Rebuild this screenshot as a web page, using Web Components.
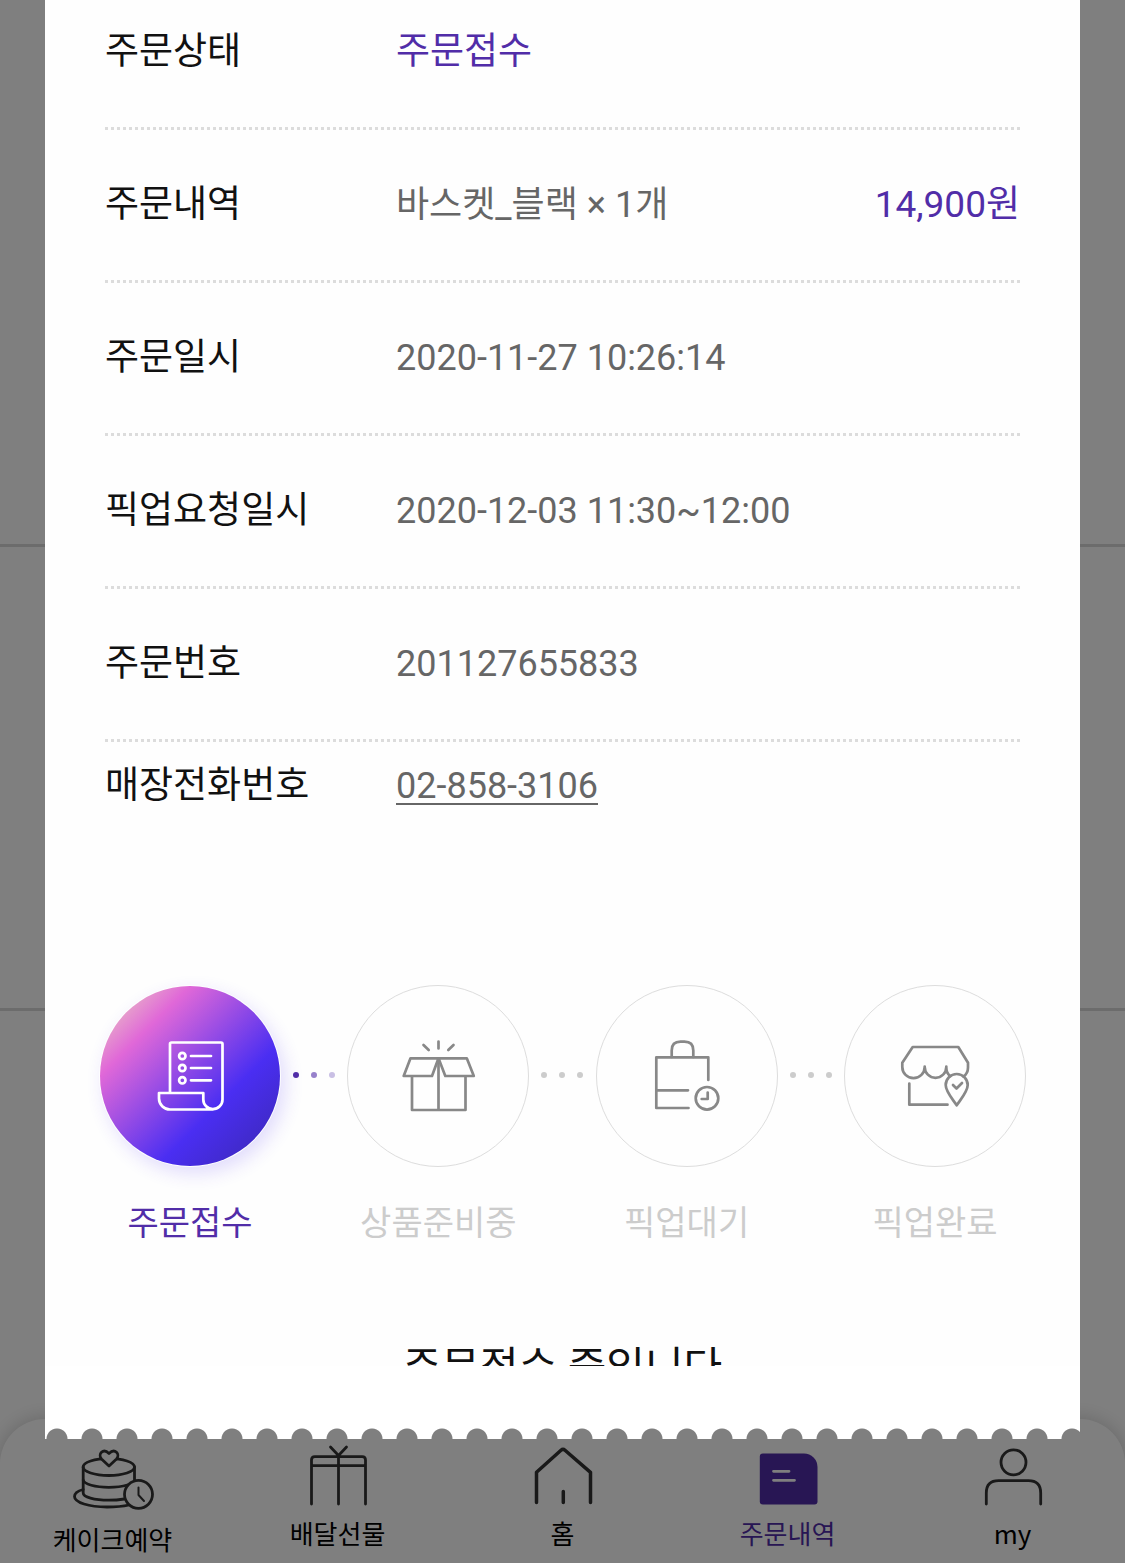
<!DOCTYPE html>
<html lang="ko">
<head>
<meta charset="utf-8">
<meta name="viewport" content="width=device-width, initial-scale=1">
<title>주문내역</title>
<style>
  body {
    margin: 0;
    background: #fff;
    font-family: Roboto, "Noto Sans CJK KR", sans-serif;
    color: #111;
    --point: #512da8;
    --line: #dcdcdc;
  }
</style>
</head>
<body>
<order-app>
  <order-sheet>
    <order-row>
      <span slot="label">주문상태</span>
      <strong>주문접수</strong>
    </order-row>
    <order-row>
      <span slot="label">주문내역</span>
      바스켓_블랙 × 1개
      <strong slot="price">14,900원</strong>
    </order-row>
    <order-row><span slot="label">주문일시</span>2020-11-27 10:26:14</order-row>
    <order-row><span slot="label">픽업요청일시</span>2020-12-03 11:30~12:00</order-row>
    <order-row><span slot="label">주문번호</span>201127655833</order-row>
    <order-row last>
      <span slot="label">매장전화번호</span>
      <a href="tel:02-858-3106">02-858-3106</a>
    </order-row>

    <step-list slot="steps">
      <step-item icon="receipt" active>주문접수</step-item>
      <step-dots active></step-dots>
      <step-item icon="box">상품준비중</step-item>
      <step-dots></step-dots>
      <step-item icon="bag">픽업대기</step-item>
      <step-dots></step-dots>
      <step-item icon="store">픽업완료</step-item>
    </step-list>

    <span slot="message">주문접수 중입니다</span>
  </order-sheet>

  <nav-item slot="nav" icon="cake" href="#cake">케이크예약</nav-item>
  <nav-item slot="nav" icon="gift" href="#gift">배달선물</nav-item>
  <nav-item slot="nav" icon="home" href="#home">홈</nav-item>
  <nav-item slot="nav" icon="order" href="#order" active>주문내역</nav-item>
  <nav-item slot="nav" icon="my" href="#my">my</nav-item>
</order-app>

<script>
// step icons share the 182 x 182 box of the circle
const stepIcons = {
  receipt: `
    <path d="M71 107V59q0-1.500 1.500-1.500H122q1.500 0 1.500 1.500V114.500a9.600 9.600 0 0 1-19.200 0V108H60v5.500a11 11 0 0 0 11 11h43"/>
    <circle cx="83.300" cy="71" r="3.200"/><circle cx="83.300" cy="83" r="3.200"/><circle cx="83.300" cy="95.300" r="3.200"/>
    <path d="M92 71h20M92 83h20M92 95.300h20"/>`,
  box: `
    <path d="M65 92v33h53.500V92M91.500 74v51"/>
    <path d="M63.500 73.300h56.300l7 17.700H98.300l-6.800-17.700L85 91H56.700z"/>
    <path d="M91.500 56.500v7M76.500 60l5.200 5M106.500 60l-5.200 5"/>`,
  bag: `
    <path d="M112.300 95V72.300h-52V123H92.500M60.300 105.300H92"/>
    <path d="M75.700 72V65.500q0-8.800 8.800-8.800h4q8.800 0 8.800 8.800V72"/>
    <circle cx="111" cy="113.300" r="11.300"/>
    <path d="M111.700 107.500v6.500h-6"/>`,
  store: `
    <path d="M102.300 81.500v1c0 3.500 1.500 6.500 3.700 8.500M119.500 91.500c2.900-2 4.500-5.300 4.500-9v-4.800L114.300 62H68.700L58.300 77.700v4.300a11.200 11.200 0 0 0 22.400 0v-.500.500a10.800 10.800 0 0 0 21.600 0"/>
    <path d="M65.300 98.500v21.200H103.500"/>
    <path d="M112.700 120.300c-3.500-5.500-11-13.500-11-20.300a11 11 0 0 1 22 0c0 6.800-7.500 14.800-11 20.300z"/>
    <path d="M109 100l3.500 3.500 5.500-5.500"/>`
};

const navIcons = {
  cake: `
    <path d="M15.200 46.500C9.500 48 6.500 50.500 6.500 53.500 6.500 59.500 21 64 39 64c8.500 0 16-.600 22-2"/>
    <path d="M15.200 24v26c0 4 11 7.200 25.600 7.200 6 0 11-.500 15.500-1.200M66.500 24v13"/>
    <ellipse cx="40.800" cy="24" rx="25.700" ry="8.500"/>
    <path d="M15.200 37c1 4.300 12 7.300 25.600 7.300 7 0 13.500-.800 18.500-2.300"/>
    <path class="paper" d="M41 23l-7.500-7c-4-4.500 1.500-11.500 7.500-5.500 6-6 11.500 1 7.500 5.500z"/>
    <circle class="paper" cx="70.500" cy="51.300" r="14"/>
    <path stroke-width="2" d="M70.500 44.500v7.500l5.500 6"/>`,
  gift: `
    <path d="M18.500 61V17q0-3.300 3.300-3.300h47.400q3.300 0 3.300 3.300v44M18.500 22.700h54M45.500 13v48M37.500 4l8 8.500L53.500 4"/>`,
  home: `
    <path stroke-width="3.500" d="M18.500 59.500V29.300L43 7.300q2-1.800 4 0L72.500 29.300V59.500M45.300 48.500v11"/>`,
  order: `
    <path fill="currentColor" stroke="none" d="M19.800 10.500H61a13.500 13.500 0 0 1 13.500 13.500v34.500a3 3 0 0 1-3 3H19.800a3 3 0 0 1-3-3v-45a3 3 0 0 1 3-3z"/>
    <path stroke="#fff" d="M30.500 28.300h15.500M30.500 37.300h21"/>`,
  my: `
    <circle cx="45.500" cy="19.300" r="12.500"/>
    <path d="M18.300 61V50q0-12.300 12.300-12.300h29.800q12.300 0 12.300 12.300v11"/>`
};

function makeRoot(el, html) {
  const template = document.createElement('template');
  template.innerHTML = html;
  el.attachShadow({ mode: 'open' }).appendChild(template.content.cloneNode(true));
}

// page behind the dim, bottom tab bar and the layer on top
class OrderApp extends HTMLElement {
  constructor() {
    super();
    makeRoot(this, `
      <style>
        :host {
          display: flex;
          flex-direction: column;
          min-height: 100vh;
        }
        main {
          flex: 1;
        }
        .card {
          box-sizing: border-box;
          height: 464px;
          border-bottom: 3px solid #d8d8d8;
        }
        .card:first-child {
          height: 547px;
        }
        nav {
          display: flex;
          align-items: flex-start;
          padding: 24px 0 5px;
          background: #fff;
          border-radius: 45px 45px 0 0;
          box-shadow: 0 0 20px rgba(0, 0, 0, 0.2);
        }
        .dim {
          position: fixed;
          inset: 0;
          display: flex;
          flex-direction: column;
          padding: 0 4% 124px;
          background: rgba(0, 0, 0, 0.5);
        }
      </style>
      <main>
        <div class="card"></div>
        <div class="card"></div>
      </main>
      <nav><slot name="nav"></slot></nav>
      <div class="dim"><slot></slot></div>
    `);
  }
}

class OrderSheet extends HTMLElement {
  constructor() {
    super();
    makeRoot(this, `
      <style>
        :host {
          flex: 1;
          min-height: 0;
          display: flex;
          flex-direction: column;
        }
        .body {
          flex: 1;
          min-height: 0;
          overflow: hidden;
          background: #fefefe;
        }
        .rows {
          padding: 0 60px;
          margin-top: -23px;
        }
        .steps {
          padding: 0 54px;
          margin-top: 172px;
        }
        .message {
          margin: 90px 0 0;
          font-size: 42px;
          line-height: 60px;
          text-align: center;
        }
        .edge {
          height: 73px;
          background: #fff;
          -webkit-mask: radial-gradient(circle at 12px 73px, transparent 10px, #000 11px) 0 0 / 35px 100% repeat-x;
          mask: radial-gradient(circle at 12px 73px, transparent 10px, #000 11px) 0 0 / 35px 100% repeat-x;
        }
      </style>
      <div class="body">
        <div class="rows"><slot></slot></div>
        <div class="steps"><slot name="steps"></slot></div>
        <p class="message"><slot name="message"></slot></p>
      </div>
      <div class="edge"></div>
    `);
  }
}

class OrderRow extends HTMLElement {
  constructor() {
    super();
    makeRoot(this, `
      <style>
        :host {
          display: flex;
          padding: 48px 0 51px;
          font-size: 37px;
          line-height: 54px;
          background: repeating-linear-gradient(90deg, var(--line) 0 3px, transparent 3px 6px) 0 100% / 100% 3px no-repeat;
        }
        :host([last]) {
          padding: 17px 0 0;
          background: none;
        }
        .label {
          width: 291px;
          flex-shrink: 0;
        }
        .value {
          flex: 1;
          font-size: 36px;
          color: #666;
        }
        ::slotted(strong) {
          font-size: 37px;
          font-weight: 400;
          color: var(--point);
        }
        ::slotted(a) {
          color: inherit;
          text-decoration: underline;
          text-decoration-thickness: 2px;
          text-underline-offset: 5px;
        }
      </style>
      <div class="label"><slot name="label"></slot></div>
      <div class="value"><slot></slot></div>
      <div class="price"><slot name="price"></slot></div>
    `);
  }
}

class StepList extends HTMLElement {
  constructor() {
    super();
    makeRoot(this, `
      <style>
        :host {
          display: flex;
          justify-content: space-between;
        }
      </style>
      <slot></slot>
    `);
  }
}

class StepItem extends HTMLElement {
  constructor() {
    super();
    makeRoot(this, `
      <style>
        :host {
          width: 182px;
          font-size: 34px;
          line-height: 50px;
          text-align: center;
          color: #ccc;
          white-space: nowrap;
        }
        :host([active]) {
          color: var(--point);
        }
        .circle {
          box-sizing: border-box;
          height: 182px;
          margin-bottom: 31px;
          border: 1px solid #ddd;
          border-radius: 50%;
          color: #888;
        }
        :host([active]) .circle {
          border-color: transparent;
          color: #fff;
          background: linear-gradient(135deg, #e8b0c8 10%, #e068d8 25%, #4a2ef2 66%, #3c28b8 95%) padding-box;
          box-shadow: 5px 7px 18px rgba(74, 46, 242, 0.16);
        }
        svg {
          display: block;
          width: 182px;
          height: 182px;
          margin: -1px;
          fill: none;
          stroke: currentColor;
          stroke-width: 2.7;
          stroke-linecap: round;
          stroke-linejoin: round;
        }
      </style>
      <div class="circle">
        <svg viewBox="0 0 182 182" aria-hidden="true">${stepIcons[this.getAttribute('icon')]}</svg>
      </div>
      <slot></slot>
    `);
  }
}

class StepDots extends HTMLElement {
  constructor() {
    super();
    makeRoot(this, `
      <style>
        :host {
          display: flex;
          align-items: center;
          justify-content: center;
          gap: 12px;
          height: 180px;
        }
        i {
          width: 6px;
          height: 6px;
          border-radius: 50%;
          background: #ccc;
        }
        :host([active]) i { background: var(--point); }
        :host([active]) i:nth-of-type(2) { opacity: 0.6; }
        :host([active]) i:nth-of-type(3) { opacity: 0.3; }
      </style>
      <i></i><i></i><i></i>
    `);
  }
}

class NavItem extends HTMLElement {
  constructor() {
    super();
    const icon = this.getAttribute('icon');
    // the cake drawing is a bit taller than the others
    const height = icon === 'cake' ? 72 : 66;
    makeRoot(this, `
      <style>
        :host {
          flex: 1;
          font-family: "Noto Sans CJK KR", sans-serif;
          font-size: 26px;
          line-height: 38px;
          text-align: center;
        }
        a {
          display: flex;
          flex-direction: column;
          align-items: center;
          gap: 5px;
          color: #000;
          text-decoration: none;
        }
        svg {
          width: 90px;
          fill: none;
          color: #333;
          stroke: currentColor;
          stroke-width: 2.8;
          stroke-linecap: round;
          stroke-linejoin: round;
        }
        .paper { fill: #fff; }
        :host([active]) a,
        :host([active]) svg { color: var(--point); }
      </style>
      <a href="${this.getAttribute('href')}">
        <svg viewBox="0 0 90 ${height}" height="${height}" aria-hidden="true">${navIcons[icon]}</svg>
        <span><slot></slot></span>
      </a>
    `);
  }
}

customElements.define('order-app', OrderApp);
customElements.define('order-sheet', OrderSheet);
customElements.define('order-row', OrderRow);
customElements.define('step-list', StepList);
customElements.define('step-item', StepItem);
customElements.define('step-dots', StepDots);
customElements.define('nav-item', NavItem);
</script>
</body>
</html>
